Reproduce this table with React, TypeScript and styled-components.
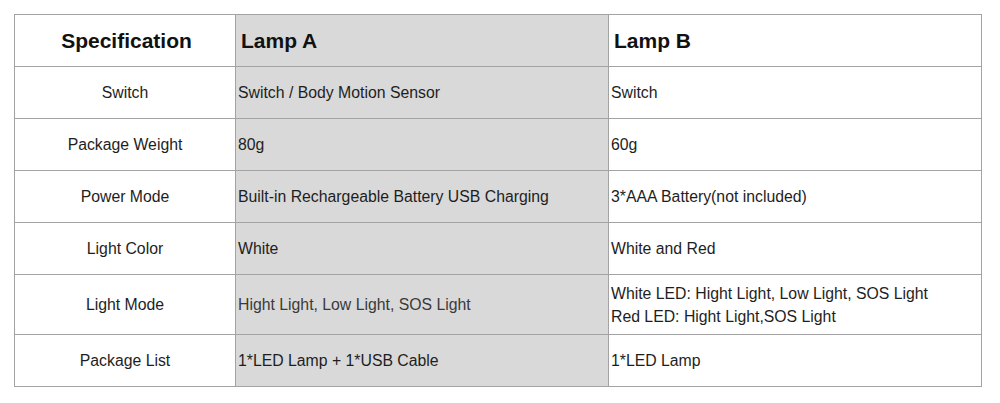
import styled, { createGlobalStyle } from "styled-components";

const GlobalStyle = createGlobalStyle`
    html, body {
        margin: 0;
        padding: 0;
        background: #ffffff;
    }
    body {
        font-family: "Liberation Sans", Arial, sans-serif;
    }
`;

const rows = [
    { name: "Switch", a: ["Switch / Body Motion Sensor"], b: ["Switch"] },
    { name: "Package Weight", a: ["80g"], b: ["60g"] },
    {
        name: "Power Mode",
        a: ["Built-in Rechargeable Battery USB Charging"],
        b: ["3*AAA Battery(not included)"]
    },
    { name: "Light Color", a: ["White"], b: ["White and Red"] },
    {
        name: "Light Mode",
        a: ["Hight Light, Low Light, SOS Light"],
        b: [
            "White LED: Hight Light, Low Light, SOS Light",
            "Red LED: Hight Light,SOS Light"
        ],
        muted: true
    },
    { name: "Package List", a: ["1*LED Lamp + 1*USB Cable"], b: ["1*LED Lamp"] }
];

const Page = styled.div`
    padding: 14px 0 0 14px;
`;

const SpecTable = styled.table`
    width: 968px;
    table-layout: fixed;
    border-collapse: collapse;
    color: #1e1e1e;
`;

const Cell = styled.td<{ $shaded?: boolean; $center?: boolean; $muted?: boolean }>`
    height: 51px;
    padding: 0 2px 0 2px;
    border: 1px solid #a3a3a3;
    background: ${(p) => (p.$shaded ? "#d9d9d9" : "#ffffff")};
    text-align: ${(p) => (p.$center ? "center" : "left")};
    color: ${(p) => (p.$muted ? "#3a3a3a" : "#1e1e1e")};
    font-size: 15.8px;
    line-height: 23px;
    vertical-align: middle;
    white-space: nowrap;
`;

const HeadCell = styled(Cell).attrs({ as: "th" })`
    font-size: 21px;
    font-weight: bold;
    color: #111111;
    padding-left: 5px;
`;

const Line = styled.div`
    display: block;
`;

const TallCell = styled(Cell)`
    height: 59px;
`;

export default function App() {
    return (
        <Page>
            <GlobalStyle />
            <SpecTable>
                <colgroup>
                    <col style={{ width: 221 }} />
                    <col style={{ width: 373 }} />
                    <col style={{ width: 373 }} />
                </colgroup>
                <thead>
                    <tr>
                        <HeadCell $center>Specification</HeadCell>
                        <HeadCell $shaded>Lamp A</HeadCell>
                        <HeadCell>Lamp B</HeadCell>
                    </tr>
                </thead>
                <tbody>
                    {rows.map((row) => {
                        const Td = row.b.length > 1 ? TallCell : Cell;
                        return (
                            <tr key={row.name}>
                                <Td $center>{row.name}</Td>
                                <Td $shaded $muted={row.muted}>
                                    {row.a.map((t) => (
                                        <Line key={t}>{t}</Line>
                                    ))}
                                </Td>
                                <Td>
                                    {row.b.map((t) => (
                                        <Line key={t}>{t}</Line>
                                    ))}
                                </Td>
                            </tr>
                        );
                    })}
                </tbody>
            </SpecTable>
        </Page>
    );
}
